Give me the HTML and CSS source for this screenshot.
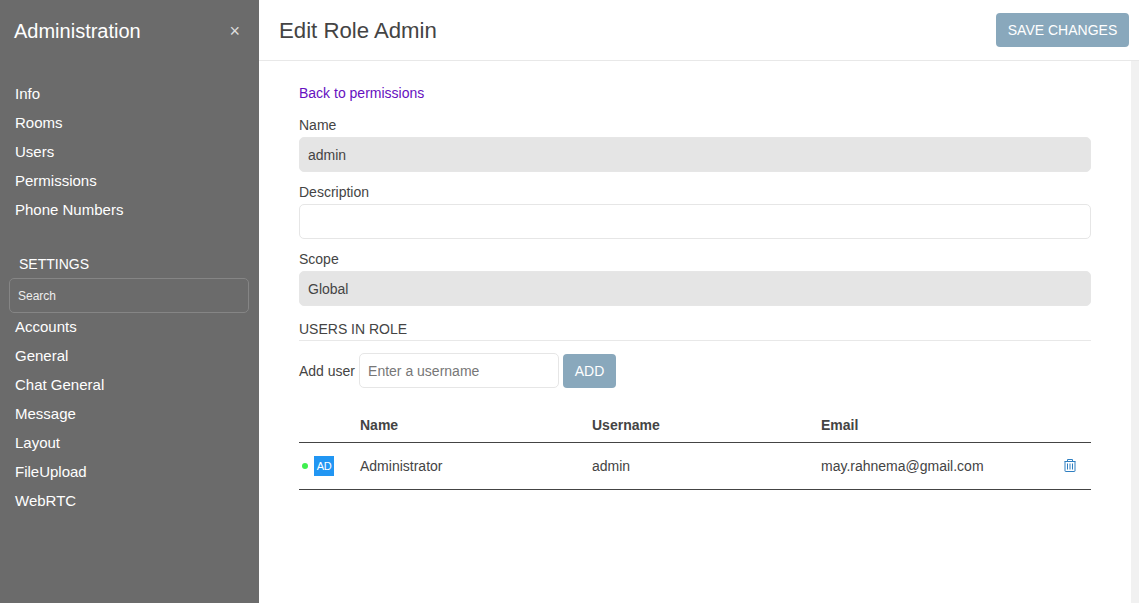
FILE: index.html
```html
<!DOCTYPE html>
<html lang="en">
<head>
    <meta charset="utf-8" />
    <title>Edit Role Admin</title>
    <link rel="stylesheet" href="styles.css">
</head>
<body>
    <aside class="sidebar">
        <header class="sidebar-head">
            <h1 class="sidebar-title">Administration</h1>
            <span class="sidebar-close">×</span>
        </header>
        <nav class="nav-list">
            <a class="nav-item">Info</a>
            <a class="nav-item">Rooms</a>
            <a class="nav-item">Users</a>
            <a class="nav-item">Permissions</a>
            <a class="nav-item">Phone Numbers</a>
        </nav>
        <h2 class="nav-heading">SETTINGS</h2>
        <input class="nav-search" type="text" placeholder="Search">
        <nav class="nav-list">
            <a class="nav-item">Accounts</a>
            <a class="nav-item">General</a>
            <a class="nav-item">Chat General</a>
            <a class="nav-item">Message</a>
            <a class="nav-item">Layout</a>
            <a class="nav-item">FileUpload</a>
            <a class="nav-item">WebRTC</a>
        </nav>
    </aside>

    <main class="main">
        <header class="page-head">
            <h1 class="page-title">Edit Role Admin</h1>
            <button class="btn btn-save">SAVE CHANGES</button>
        </header>
        <div class="page-body">
            <section class="content">
                <a class="back-link" href="#">Back to permissions</a>

                <label class="field-label">Name</label>
                <input class="field-input" type="text" value="admin" disabled>

                <label class="field-label">Description</label>
                <input class="field-input" type="text">

                <label class="field-label">Scope</label>
                <input class="field-input" type="text" value="Global" disabled>

                <h3 class="section-title">USERS IN ROLE</h3>
                <div class="add-user">
                    <label>Add user</label>
                    <input class="add-input" type="text" placeholder="Enter a username">
                    <button class="btn btn-add">ADD</button>
                </div>

                <table class="user-table">
                    <thead>
                        <tr>
                            <th class="col-avatar"></th>
                            <th class="col-name">Name</th>
                            <th class="col-username">Username</th>
                            <th>Email</th>
                            <th class="col-action"></th>
                        </tr>
                    </thead>
                    <tbody>
                        <tr>
                            <td>
                                <div class="user-badge">
                                    <span class="status-dot"></span>
                                    <span class="avatar">AD</span>
                                </div>
                            </td>
                            <td>Administrator</td>
                            <td>admin</td>
                            <td>may.rahnema@gmail.com</td>
                            <td>
                                <svg class="trash" width="12" height="13" viewBox="0 0 12 13" fill="none" stroke="#2f7fc1" stroke-width="1">
                                    <path d="M0.5 2.5h11M3.5 2.5V.5h5v2M1 2.5v9.5c0 .3.2.5.5.5h9c.3 0 .5-.2.5-.5V2.5M3.5 4.5v6M6 4.5v6M8.5 4.5v6"/>
                                </svg>
                            </td>
                        </tr>
                    </tbody>
                </table>
            </section>
            <div class="scroll-track"></div>
        </div>
    </main>
</body>
</html>
```

FILE: styles.css
```css
* {
    box-sizing: border-box;
}

html, body {
    height: 100%;
}

body {
    margin: 0;
    display: flex;
    overflow: hidden;
    font-family: "Liberation Sans", Arial, sans-serif;
    font-size: 14px;
    color: #444;
    background: #fff;
}

/* sidebar */
.sidebar {
    width: 259px;
    flex-shrink: 0;
    background: #6b6b6b;
    color: #fff;
}

.sidebar-head {
    height: 61px;
    padding: 2px 19px 0 14px;
    display: flex;
    align-items: center;
    justify-content: space-between;
}

.sidebar-title {
    margin: 0;
    font-size: 20px;
    font-weight: 400;
}

.sidebar-close {
    font-size: 18px;
    color: #ddd;
}

.nav-list {
    display: flex;
    flex-direction: column;
}

.sidebar-head + .nav-list {
    margin-top: 18px;
}

.nav-item {
    height: 29px;
    line-height: 29px;
    padding-left: 15px;
    font-size: 15px;
}

.nav-heading {
    margin: 26px 0 0;
    height: 28px;
    line-height: 28px;
    padding-left: 19px;
    font-size: 14px;
    font-weight: 400;
}

.nav-search {
    display: block;
    width: 240px;
    height: 35px;
    margin: 0 0 0 9px;
    padding: 0 8px;
    background: transparent;
    border: 1px solid #858585;
    border-radius: 5px;
    font: 12px "Liberation Sans", Arial, sans-serif;
    color: #fff;
}

.nav-search::placeholder {
    color: #eee;
    opacity: 1;
}

.nav-search + .nav-list {
    margin-top: -1px;
}

/* main area */
.main {
    flex: 1;
    min-width: 0;
    display: flex;
    flex-direction: column;
}

.page-head {
    height: 61px;
    flex-shrink: 0;
    padding: 0 10px 0 20px;
    display: flex;
    align-items: center;
    justify-content: space-between;
    border-bottom: 1px solid #e8e8e8;
}

.page-title {
    margin: 1px 0 0;
    font-size: 22.2px;
    font-weight: 400;
    color: #444;
}

.btn {
    height: 34px;
    border: none;
    border-radius: 4px;
    background: #89a8bc;
    color: #fff;
    font: 14px "Liberation Sans", Arial, sans-serif;
}

.btn-save {
    width: 133px;
    padding: 0;
}

.btn-add {
    width: 53px;
    padding: 0;
}

.page-body {
    flex: 1;
    display: flex;
    min-height: 0;
}

.content {
    flex: 1;
    padding: 24px 40px 0;
}

.scroll-track {
    width: 8px;
    background: #f1f1f1;
}

.back-link {
    display: block;
    height: 17px;
    line-height: 17px;
    margin-bottom: 15px;
    color: #6610c0;
    text-decoration: none;
}

.field-label {
    display: block;
    height: 17px;
    line-height: 17px;
    margin: 12px 0 3px;
}

.field-input {
    display: block;
    width: 100%;
    height: 35px;
    padding: 0 8px;
    border: 1px solid #e6e6e6;
    border-radius: 5px;
    background: #fff;
    color: #444;
    font: 14px "Liberation Sans", Arial, sans-serif;
}

.field-input:disabled {
    background: #e5e5e5;
    opacity: 1;
}

.section-title {
    margin: 15px 0 0;
    height: 20px;
    font-size: 14px;
    font-weight: 400;
    border-bottom: 1px solid #e8e8e8;
}

.add-user {
    display: flex;
    align-items: center;
    gap: 4px;
    margin-top: 12px;
}

.add-input {
    width: 200px;
    height: 35px;
    padding: 0 8px;
    border: 1px solid #e6e6e6;
    border-radius: 5px;
    font: 14px "Liberation Sans", Arial, sans-serif;
}

.add-input::placeholder {
    color: #777;
    opacity: 1;
}

.user-table {
    width: 100%;
    margin-top: 18px;
    border-collapse: collapse;
    table-layout: fixed;
}

.user-table th {
    height: 36px;
    padding: 2px 1px 0 0;
    text-align: left;
    font-weight: 700;
    border-bottom: 1px solid #444;
}

.user-table td {
    height: 47px;
    padding: 0 1px 0 0;
    border-bottom: 1px solid #444;
}

.col-avatar {
    width: 61px;
}

.col-name {
    width: 232px;
}

.col-username {
    width: 229px;
}

.col-action {
    width: 50px;
}

.user-badge {
    display: flex;
    align-items: center;
    gap: 6px;
    padding-left: 3px;
}

.status-dot {
    width: 6px;
    height: 6px;
    border-radius: 50%;
    background: #3fef4f;
}

.avatar {
    width: 20px;
    height: 20px;
    line-height: 20px;
    text-align: center;
    background: #2196f3;
    color: #fff;
    font-size: 11px;
    letter-spacing: -0.5px;
}

.trash {
    display: block;
    margin-left: 23px;
}
```
